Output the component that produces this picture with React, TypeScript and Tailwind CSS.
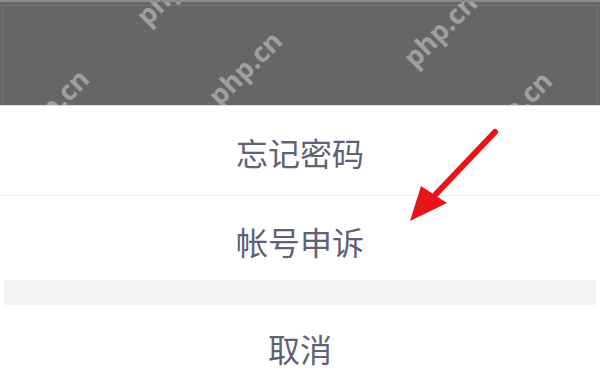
const marks = [
  { x: 173, y: -14 },
  { x: 245, y: 66 },
  { x: 52, y: 104 },
  { x: 440, y: 28 },
  { x: 515, y: 106 },
];

function Item({ label, className }: { label: string; className: string }) {
  return (
    <div className={`flex items-center justify-center text-[32px] leading-none text-[#5d6275] ${className}`}>
      {label}
    </div>
  );
}

export default function App() {
  return (
    <div
      className="relative h-[376px] w-[600px] overflow-hidden bg-white"
      style={{ fontFamily: '"Noto Sans CJK SC", "Noto Sans", sans-serif' }}
    >
      <div className="relative h-[105px] overflow-hidden border-t-2 border-[#8a8a8a] bg-[#666666]">
        <div className="mx-[2px] mt-[3px] h-full border-x border-t border-[#747474]" />
        {marks.map((m, i) => (
          <span
            key={i}
            className="absolute -translate-x-1/2 -translate-y-1/2 -rotate-45 whitespace-nowrap text-[27px] font-bold text-white/40"
            style={{ left: m.x, top: m.y, fontFamily: '"Open Sans", sans-serif' }}
          >
            php.cn
          </span>
        ))}
      </div>
      <div className="h-[1px] bg-[#dcdcdc]" />

      <Item label="忘记密码" className="h-[89px] pt-[2px]" />
      <div className="h-[1px] bg-[#ececec]" />
      <Item label="帐号申诉" className="h-[84px] pt-[6px]" />
      <div className="mx-[4px] h-[25px] bg-[#f3f3f3]" />
      <Item label="取消" className="h-[86px]" />

      <svg
        className="pointer-events-none absolute inset-0"
        width="600"
        height="376"
        viewBox="0 0 600 376"
      >
        <line x1="495" y1="132" x2="436" y2="194" stroke="#e8141a" strokeWidth="6" strokeLinecap="round" />
        <polygon points="410,221 421,186 447,203" fill="#e8141a" />
      </svg>
    </div>
  );
}
